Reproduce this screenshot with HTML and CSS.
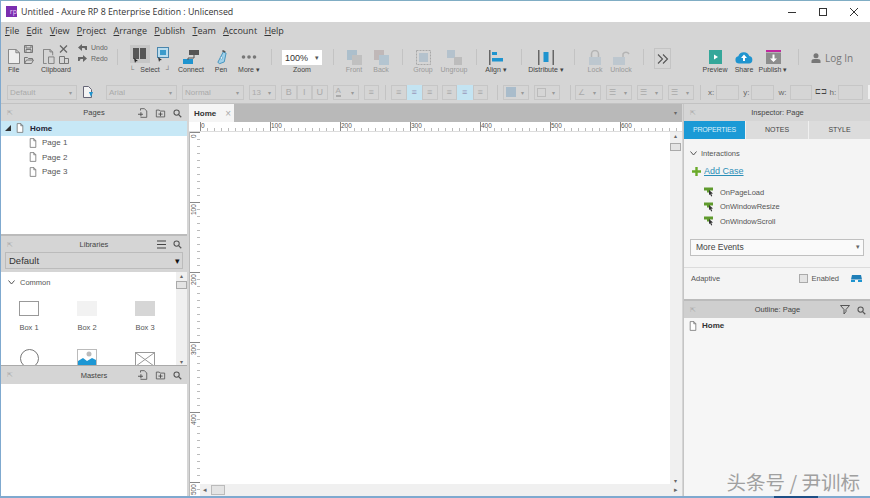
FILE: index.html
```html
<!DOCTYPE html>
<html lang="en">
<head>
  <meta charset="UTF-8" />
  <title>Untitled - Axure RP 8</title>
  <link rel="stylesheet" href="styles.css">
</head>
<body>
  <svg class="defs" width="0" height="0">
    <symbol id="page" viewBox="0 0 10 12"><path d="M1.500.500h4.600l2.400 2.600v8.400h-7zM6 .600v2.600h2.400" fill="#fff" stroke="#666" stroke-width=".9"/></symbol>
    <symbol id="addpage" viewBox="0 0 12 12"><path d="M3 3V.8h4.500L10.500 3.500v7.700H3" fill="none" stroke="#555"/><path d="M0 7.500h6M3.500 5v5" stroke="#444"/></symbol>
    <symbol id="addfolder" viewBox="0 0 12 12"><path d="M1 2.500h3.500l1 1.200h5.500v7H1z" fill="none" stroke="#555"/><path d="M3.500 7.300h5M6 5v4.800" stroke="#444"/></symbol>
    <symbol id="search" viewBox="0 0 12 12"><circle cx="4.800" cy="4.800" r="3.500" fill="none" stroke="#555" stroke-width="1.400"/><path d="M7.500 7.500l3.500 3.500" stroke="#555" stroke-width="1.600"/></symbol>
    <symbol id="event" viewBox="0 0 10 10"><path d="M0 .5h9v3H6v2H3v-2H0z" fill="#5f9a2c"/><path d="M5 3l4 3.500-1.800.3 1 2.300-1 .4-1-2.300L5 8z" fill="#333"/></symbol>
  </svg>

  <div class="window">
    <header class="titlebar">
      <span class="app-logo">rp</span>
      <span class="title">Untitled - Axure RP 8 Enterprise Edition : Unlicensed</span>
      <div class="win-buttons">
        <svg width="10" height="10"><path d="M1 5.500h8" stroke="#333"/></svg>
        <svg width="10" height="10"><rect x="1.500" y="1.500" width="7" height="7" fill="none" stroke="#333"/></svg>
        <svg width="10" height="10"><path d="M1 1l8 8M9 1l-8 8" stroke="#333"/></svg>
      </div>
    </header>

    <nav class="menu">
      <span><u>F</u>ile</span>
      <span><u>E</u>dit</span>
      <span><u>V</u>iew</span>
      <span><u>P</u>roject</span>
      <span><u>A</u>rrange</span>
      <span><u>P</u>ublish</span>
      <span><u>T</u>eam</span>
      <span><u>A</u>ccount</span>
      <span><u>H</u>elp</span>
    </nav>

    <section class="tools">
      <div class="tool file-tool">
        <div class="tool-icons">
          <svg width="12" height="15" viewBox="0 0 13 18" preserveAspectRatio="none"><path d="M.5.500h8l4 4v13H.5zM8.500.500v4h4" fill="#eee" stroke="#777"/></svg>
          <div class="mini-stack">
            <svg width="9" height="8"><path d="M.5.500h8v7h-8zM2 .500v2.500h5V.5M2 7.500v-3h5v3" fill="none" stroke="#777"/></svg>
            <svg width="10" height="8"><path d="M.5 1.500h3l1 1h4v1.500M.5 7.500v-6M.5 7.500h7l2-3.500h-7z" fill="none" stroke="#777"/></svg>
          </div>
        </div>
        <span class="tool-label">File</span>
      </div>
      <div class="tool clip-tool">
        <div class="tool-icons">
          <svg width="12" height="15" viewBox="0 0 13 18" preserveAspectRatio="none"><path d="M.5.500h7l3 3v4M7.500.500v3h3M4 17.500H.5V.5M6 9.500h6v8H6z" fill="none" stroke="#777"/></svg>
          <div class="mini-stack">
            <svg width="9" height="8"><path d="M1 .5l7 7M8 .5l-7 7" stroke="#666" stroke-width="1.300"/></svg>
            <svg width="10" height="8"><path d="M.5 .5h5v7h-5zM5.500 2.500h4v5h-4z" fill="none" stroke="#777"/></svg>
          </div>
        </div>
        <span class="tool-label">Clipboard</span>
      </div>
      <div class="undo-tool">
        <span class="undo-row"><svg width="9" height="7"><path d="M0 3.500L4 0v2h5v4H7.500L6.500 4H4v3z" fill="#666"/></svg>Undo</span>
        <span class="undo-row"><svg width="9" height="7"><path d="M9 3.500L5 0v2H0v4h1.500l1-2H5v3z" fill="#666"/></svg>Redo</span>
      </div>
      <i class="sep"></i>
      <div class="tool">
        <div class="tool-icons select-icons">
          <span class="select-box"><svg width="14" height="15"><path d="M0 0h6v11H0zM7 0h6v11H7z" fill="#555"/><path d="M1 10l4 3-2 .3-1 1.700z" fill="#222"/></svg></span>
          <svg width="13" height="15"><rect x=".5" y=".5" width="11" height="10" fill="#bde" stroke="#4a86ad"/><rect x="3" y="3" width="6" height="5" fill="#3c9bcb"/><path d="M1 10l4 3-2 .3-1 1.700z" fill="#333"/></svg>
        </div>
        <span class="tool-label select-label"><b>└</b>Select<b>┘</b></span>
      </div>
      <div class="tool">
        <svg width="17" height="15"><rect x="6" y="0" width="10" height="5" fill="#555"/><rect x="0" y="9" width="10" height="5" fill="#1f94cf"/><path d="M11 5v3H5v2" fill="none" stroke="#555"/></svg>
        <span class="tool-label">Connect</span>
      </div>
      <div class="tool">
        <svg width="11" height="15" viewBox="0 0 12 17" preserveAspectRatio="none"><path d="M8 2l3 1.500-2 10-5 2-2-1.500z" fill="#9fd0ea" stroke="#3c8fba"/><circle cx="6" cy="9" r="1.300" fill="#fff" stroke="#3c8fba" stroke-width=".6"/><path d="M7.500 0l3 1.500-1 1.500-3-1.500z" fill="#555"/></svg>
        <span class="tool-label">Pen</span>
      </div>
      <div class="tool">
        <svg width="16" height="15"><circle cx="2.500" cy="7" r="1.800" fill="#777"/><circle cx="8" cy="7" r="1.800" fill="#777"/><circle cx="13.500" cy="7" r="1.800" fill="#777"/></svg>
        <span class="tool-label">More ▾</span>
      </div>
      <i class="sep"></i>
      <div class="tool">
        <div class="zoom-box">100%<em>▾</em></div>
        <span class="tool-label">Zoom</span>
      </div>
      <i class="sep"></i>
      <div class="tool off">
        <svg width="15" height="15"><rect x="0" y="0" width="10" height="10" fill="#9fb8c9"/><rect x="5" y="5" width="10" height="10" fill="#b9b9b9"/></svg>
        <span class="tool-label">Front</span>
      </div>
      <div class="tool off">
        <svg width="15" height="15"><rect x="0" y="0" width="10" height="10" fill="#b9afaf"/><rect x="5" y="5" width="10" height="10" fill="#a9c0d0"/></svg>
        <span class="tool-label">Back</span>
      </div>
      <i class="sep"></i>
      <div class="tool off">
        <svg width="15" height="15"><rect x=".5" y=".5" width="14" height="14" fill="none" stroke="#999" stroke-dasharray="2 1"/><rect x="3" y="3" width="9" height="9" fill="#a9bccb"/></svg>
        <span class="tool-label">Group</span>
      </div>
      <div class="tool off">
        <svg width="15" height="15"><rect x="0" y="0" width="8" height="8" fill="#a9bccb"/><rect x="7" y="7" width="8" height="8" fill="#b4b4b4"/></svg>
        <span class="tool-label">Ungroup</span>
      </div>
      <i class="sep"></i>
      <div class="tool">
        <svg width="15" height="15"><rect x="0" y="0" width="1.500" height="15" fill="#666"/><rect x="3" y="2" width="5" height="3" fill="#1f94cf"/><rect x="3" y="8" width="11" height="3.500" fill="#1f94cf"/></svg>
        <span class="tool-label">Align ▾</span>
      </div>
      <i class="sep"></i>
      <div class="tool">
        <svg width="16" height="15"><rect x="0" y="0" width="1.500" height="15" fill="#666"/><rect x="14.500" y="0" width="1.500" height="15" fill="#666"/><rect x="5.500" y="2" width="5" height="10" fill="#1f94cf"/></svg>
        <span class="tool-label">Distribute ▾</span>
      </div>
      <i class="sep"></i>
      <div class="tool off">
        <svg width="14" height="15"><path d="M3.500 7V4a3.500 3.500 0 017 0v3" fill="none" stroke="#aaa" stroke-width="1.500"/><rect x="1" y="7" width="12" height="8" fill="#b5c3cd"/></svg>
        <span class="tool-label">Lock</span>
      </div>
      <div class="tool off">
        <svg width="17" height="15"><path d="M10 7V4a3.500 3.500 0 016 0" fill="none" stroke="#aaa" stroke-width="1.500"/><rect x="0" y="7" width="12" height="8" fill="#b5c3cd"/></svg>
        <span class="tool-label">Unlock</span>
      </div>
      <i class="sep"></i>
      <div class="more-tools">
        <svg width="12" height="10"><path d="M1 .5L5.500 5 1 9.500M6 .5L10.500 5 6 9.500" fill="none" stroke="#555" stroke-width="1.100"/></svg>
      </div>
      <div class="tool">
        <svg width="13" height="14"><rect width="13" height="14" fill="#35a79a"/><path d="M5 4.500l4 2.500-4 2.500z" fill="#fff"/></svg>
        <span class="tool-label">Preview</span>
      </div>
      <div class="tool">
        <svg width="18" height="14" viewBox="0 0 18 14"><path d="M4 13.500a3.700 3.700 0 01-.7-7.300A5.800 5.800 0 0114.300 6a3.800 3.800 0 01-.3 7.500z" fill="#1f94cf"/><path d="M9 4.500L12 8h-2v3H8V8H6z" fill="#fff"/></svg>
        <span class="tool-label">Share</span>
      </div>
      <div class="tool">
        <svg width="15" height="14"><rect width="15" height="2" fill="#c0289f"/><rect y="2.500" width="15" height="11.500" fill="#8d8d8d"/><path d="M6.500 4.500h2v4H11l-3.500 3.500L4 8.500h2.500z" fill="#fff"/></svg>
        <span class="tool-label">Publish ▾</span>
      </div>
      <i class="sep"></i>
      <div class="login">
        <svg width="10" height="10"><circle cx="5" cy="2.800" r="2.500" fill="#777"/><path d="M.5 10V8q0-2 3-2h3q3 0 3 2v2z" fill="#777"/></svg>
        <span>Log In</span>
      </div>
    </section>

    <section class="format">
      <div class="fld fld-style">Default<em>▾</em></div>
      <svg class="style-icon" width="11" height="12"><path d="M.5.500h5l3 3v8h-8z" fill="#f4f4f4" stroke="#667"/><path d="M6 6l4 0-2 5z" fill="#1f94cf"/></svg>
      <div class="fld fld-font">Arial<em>▾</em></div>
      <div class="fld fld-weight">Normal<em>▾</em></div>
      <div class="fld fld-size">13<em>▾</em></div>
      <div class="btns"><span>B</span><span>I</span><span>U</span></div>
      <div class="fld fld-color"><i class="mark mark-a">A</i><em>▾</em></div>
      <div class="btns btns-one"><span>≡</span></div>
      <i class="sep-format"></i>
      <div class="btns btns-align"><span>≡</span><span class="on">≡</span><span>≡</span></div>
      <div class="btns btns-align"><span>≡</span><span class="on">≡</span><span>≡</span></div>
      <i class="sep-format sep-a"></i>
      <div class="fld fld-swatch"><i class="mark mark-fill"></i><em>▾</em></div>
      <div class="fld fld-swatch"><i class="mark mark-line"></i><em>▾</em></div>
      <i class="sep-format sep-b"></i>
      <div class="fld fld-swatch"><i class="mark">∠</i><em>▾</em></div>
      <div class="fld fld-swatch"><i class="mark">☰</i><em>▾</em></div>
      <div class="fld fld-swatch"><i class="mark">☰</i><em>▾</em></div>
      <div class="fld fld-swatch"><i class="mark">☰</i><em>▾</em></div>
      <i class="sep-format sep-c"></i>
      <label class="coord">x:<span class="coord-x"></span></label>
      <label class="coord">y:<span class="coord-y"></span></label>
      <label class="coord">w:<span class="coord-w"></span></label>
      <label class="coord"><b>⊏⊐</b>h:<span class="coord-h"></span></label>
      <span class="format-end"></span>
    </section>

    <div class="workspace">
      <aside class="left">
        <div class="panel-head">
          <i class="pin">⇱</i><span>Pages</span>
          <div class="head-icons">
            <svg width="10" height="10"><use href="#addpage"/></svg>
            <svg width="11" height="10"><use href="#addfolder"/></svg>
            <svg width="9" height="9"><use href="#search"/></svg>
          </div>
        </div>
        <ul class="pages">
          <li class="page-home">
            <svg class="tree-arrow" width="6" height="6"><path d="M6 0v6H0z" fill="#333"/></svg>
            <svg width="8" height="10"><use href="#page"/></svg>
            <b>Home</b>
          </li>
          <li><svg width="8" height="10"><use href="#page"/></svg>Page 1</li>
          <li><svg width="8" height="10"><use href="#page"/></svg>Page 2</li>
          <li><svg width="8" height="10"><use href="#page"/></svg>Page 3</li>
        </ul>

        <div class="panel-head libs-head">
          <i class="pin">⇱</i><span>Libraries</span>
          <div class="head-icons">
            <svg width="9" height="9"><path d="M0 1h9M0 4.500h9M0 8h9" stroke="#444" stroke-width="1.200"/></svg>
            <svg width="9" height="9"><use href="#search"/></svg>
          </div>
        </div>
        <div class="lib-select-row">
          <div class="lib-select">Default<em>▾</em></div>
        </div>
        <div class="lib-body">
          <div class="lib-list">
            <div class="lib-group"><svg width="7" height="5"><path d="M.5.500L3.500 4 6.500.500" fill="none" stroke="#555"/></svg>Common</div>
            <div class="widgets">
              <div class="widget"><i class="box box1"></i>Box 1</div>
              <div class="widget"><i class="box box2"></i>Box 2</div>
              <div class="widget"><i class="box box3"></i>Box 3</div>
              <div class="widget"><i class="circle"></i></div>
              <div class="widget">
                <svg class="pic" width="20" height="18"><rect x=".5" y=".5" width="19" height="17" fill="#fff" stroke="#bbb"/><circle cx="12" cy="5" r="2.500" fill="#bbb"/><path d="M1 12l5-3 4 3 5-3 4 2v7H1z" fill="#1d97d4"/></svg>
              </div>
              <div class="widget">
                <svg class="pic pic-ph" width="20" height="15"><rect x=".5" y=".5" width="19" height="14" fill="#fff" stroke="#999"/><path d="M1 1l18 13M19 1L1 14" stroke="#999"/></svg>
              </div>
            </div>
          </div>
          <div class="lib-scroll"><em>▴</em><i></i><em class="down">▾</em></div>
        </div>

        <div class="panel-head masters-head">
          <i class="pin">⇱</i><span>Masters</span>
          <div class="head-icons">
            <svg width="10" height="10"><use href="#addpage"/></svg>
            <svg width="11" height="10"><use href="#addfolder"/></svg>
            <svg width="9" height="9"><use href="#search"/></svg>
          </div>
        </div>
        <div class="masters-body"></div>
      </aside>

      <main class="center">
        <div class="tabs">
          <div class="tab"><b>Home</b><i>×</i></div>
          <em class="tabs-menu">▾</em>
        </div>
        <div class="ruler-top">
          <span>0</span><span>100</span><span>200</span><span>300</span><span>400</span><span>500</span><span>600</span>
        </div>
        <div class="stage">
          <div class="ruler-left">
            <span>0</span><span>100</span><span>200</span><span>300</span><span>400</span><span>500</span>
          </div>
          <div class="stage-main">
            <div class="stage-view">
              <div class="canvas"></div>
              <div class="v-scroll"><em>▴</em><i></i><em class="down">▾</em></div>
            </div>
            <div class="h-scroll"><em>◂</em><i></i><em class="end">▸</em></div>
          </div>
        </div>
      </main>

      <aside class="right">
        <div class="panel-head">
          <i class="pin">⇱</i><span>Inspector: Page</span>
        </div>
        <div class="insp-tabs">
          <span class="active">PROPERTIES</span>
          <span>NOTES</span>
          <span>STYLE</span>
        </div>
        <div class="insp-body">
          <div class="interactions"><svg width="7" height="5"><path d="M.5.500L3.500 4 6.500.500" fill="none" stroke="#555"/></svg>Interactions</div>
          <div class="add-case"><svg width="9" height="9"><path d="M4.500 0v9M0 4.500h9" stroke="#6aaa2a" stroke-width="2.400"/></svg><a>Add Case</a></div>
          <ul class="events">
            <li><svg width="10" height="10"><use href="#event"/></svg>OnPageLoad</li>
            <li><svg width="10" height="10"><use href="#event"/></svg>OnWindowResize</li>
            <li><svg width="10" height="10"><use href="#event"/></svg>OnWindowScroll</li>
          </ul>
          <div class="more-events">More Events<em>▾</em></div>
          <div class="adaptive">
            <span>Adaptive</span>
            <i class="check"></i>
            <span class="enabled">Enabled</span>
            <svg width="11" height="7"><path d="M1 0h9l1 4.500H0z" fill="#1f7fb8"/><path d="M0 5h4v2H0zM7 5h4v2H7z" fill="#1f94cf"/></svg>
          </div>
        </div>
        <div class="panel-head outline-head">
          <i class="pin">⇱</i><span>Outline: Page</span>
          <div class="head-icons">
            <svg width="10" height="10"><path d="M.5.500h9L6 4.500v2L4 9V4.500z" fill="none" stroke="#555"/></svg>
            <svg width="9" height="9"><use href="#search"/></svg>
          </div>
        </div>
        <div class="outline-body">
          <svg width="8" height="10"><use href="#page"/></svg><b>Home</b>
        </div>
      </aside>
    </div>
    <div class="bottom-edge"></div>
  </div>

  <div class="watermark">头条号 / 尹训标</div>
</body>
</html>
```

FILE: styles.css
```css
* {
  box-sizing: border-box;
}

html,
body {
  margin: 0;
  height: 100%;
  overflow: hidden;
}

body {
  position: relative;
  font-family: "Liberation Sans", Arial, sans-serif;
  font-size: 8px;
  color: #444;
  background: #d5d5d5;
}

ul {
  margin: 0;
  padding: 0;
  list-style: none;
}

em,
i {
  font-style: normal;
}

svg {
  flex: none;
  display: block;
}

.defs {
  position: absolute;
}

.window {
  display: flex;
  flex-direction: column;
  width: 870px;
  height: 498px;
  border-left: 1px solid #7fa9cf;
}

/* title + menu */

.titlebar {
  display: flex;
  align-items: center;
  height: 22px;
  flex: none;
  padding-left: 5px;
  background: #fff;
  border-top: 1px solid #80adc4;
  font-family: "Open Sans", sans-serif;
  font-size: 8.800px;
  color: #333;
}

.app-logo {
  width: 11px;
  height: 11px;
  margin-right: 4px;
  background: #7b2fb0;
  color: #e9c9f5;
  font-size: 7px;
  line-height: 12px;
  text-align: right;
}

.win-buttons {
  display: flex;
  gap: 21px;
  margin-left: auto;
  margin-right: 11px;
}

.menu {
  display: flex;
  flex: none;
  gap: 7.300px;
  height: 16px;
  align-items: center;
  padding-left: 4px;
  font-family: "Open Sans", sans-serif;
  font-size: 9px;
  color: #333;
}

/* big toolbar */

.tools {
  display: grid;
  flex: none;
  height: 44px;
  grid-template-columns: 37px 30px 42px 9px 56px 26px 34px 22px 22px 40px 22px 20px 34px 8px 34px 28px 16px 24px 26px 24px 32px 10px 42px 2px 56px 30px 28px 30px 20px 44px;
  align-items: start;
  padding: 8px 0 0 3px;
}

.tool {
  display: flex;
  flex-direction: column;
  align-items: center;
  justify-content: flex-end;
  height: 28px;
  white-space: nowrap;
}

.tool > svg {
  margin-bottom: auto;
  margin-top: 4px;
}

.tool-icons {
  display: flex;
  align-items: flex-end;
  gap: 4px;
  margin-top: -1px;
  margin-bottom: auto;
}

.file-tool {
  align-items: flex-start;
  padding-left: 4px;
}

.mini-stack {
  display: flex;
  flex-direction: column;
  gap: 3px;
}

.tool-label {
  font-size: 7px;
  line-height: 8px;
  color: #444;
}

.off svg {
  opacity: 0.75;
}

.off .tool-label {
  color: #999;
}

.undo-tool {
  display: flex;
  flex-direction: column;
  gap: 4px;
  padding-left: 7px;
  margin-top: -2px;
  font-size: 7px;
  color: #666;
}

.undo-row {
  display: flex;
  gap: 4px;
  align-items: center;
}

.sep {
  justify-self: center;
  width: 1px;
  height: 16px;
  margin-top: 3px;
  background: #c3c3c3;
}

.select-icons {
  gap: 7px;
  align-items: center;
}

.select-box {
  padding: 3px 3px 0;
  background: #c6c6c6;
}

.select-label {
  display: flex;
  gap: 6px;
}

.select-label b {
  font-weight: normal;
  color: #777;
}

.zoom-box {
  display: flex;
  justify-content: space-between;
  align-items: center;
  width: 40px;
  height: 15px;
  margin-top: 4px;
  margin-bottom: auto;
  padding: 0 3px 0 3px;
  background: #fff;
  font-size: 9px;
  color: #333;
}

.zoom-box em {
  font-size: 7px;
  color: #555;
}

.more-tools {
  display: flex;
  align-items: center;
  justify-content: center;
  width: 17px;
  height: 21px;
  margin: 2px 0 0 10px;
  border: 1px solid #c4c4c4;
}

.login {
  display: flex;
  align-items: center;
  gap: 4px;
  margin: 5px 0 0 3px;
  font-family: "Open Sans", sans-serif;
  font-size: 10px;
  color: #777;
  white-space: nowrap;
}

/* format toolbar */

.format {
  display: flex;
  flex: none;
  align-items: center;
  height: 22px;
  padding: 0 0 1px 6px;
  color: #aaa;
  border-bottom: 1px solid #c2c2c2;
}

.format > * {
  flex: none;
}

.fld {
  display: flex;
  justify-content: space-between;
  align-items: center;
  height: 15px;
  padding: 0 4px 0 2px;
  margin-right: 5px;
  border: 1px solid #c6c6c6;
  font-size: 8px;
}

.fld em {
  font-size: 6px;
  color: #999;
}

.fld-style {
  width: 70px;
}

.style-icon {
  margin: 0 12px 0 1px;
}

.fld-font {
  width: 71px;
}

.fld-weight {
  width: 62px;
}

.fld-size {
  width: 27px;
}

.fld-color {
  width: 26px;
}

.fld-swatch {
  width: 26px;
}

.btns {
  display: flex;
  margin-right: 5px;
}

.btns span {
  display: block;
  width: 15.500px;
  height: 15px;
  border: 1px solid #c6c6c6;
  text-align: center;
  line-height: 13px;
  font-size: 9px;
}

.btns .on {
  background: #c4e4f2;
  color: #99b;
  border-color: #c4e4f2;
}

.btns-align {
  margin-right: 4px;
}

.mark {
  font-size: 8px;
  color: #aaa;
}

.mark-a {
  border-bottom: 2px solid #aaa;
  line-height: 8px;
}

.mark-fill {
  width: 10px;
  height: 10px;
  background: #a9bccb;
}

.mark-line {
  width: 9px;
  height: 9px;
  border: 1px solid #bbb;
}

.sep-format {
  width: 1px;
  height: 15px;
  margin: 0 5px 0 1px;
  background: #c3c3c3;
}

.sep-a {
  margin: 0 5px 0 5px;
}

.sep-b {
  margin: 0 4px 0 5px;
}

.sep-c {
  margin: 0 7px 0 1px;
}

.coord {
  display: flex;
  align-items: center;
  gap: 2px;
  color: #666;
  font-size: 8px;
}

.coord span {
  display: block;
  height: 15px;
  border: 1px solid #c6c6c6;
}

.coord b {
  font-weight: normal;
  font-size: 7px;
  color: #444;
}

.coord-x {
  width: 23px;
  margin-right: 4px;
}

.coord-y {
  width: 23px;
  margin-right: 4px;
}

.coord-w {
  width: 22px;
  margin-left: 2px;
  margin-right: 3px;
}

.coord-h {
  width: 25px;
  margin-right: 5px;
}

.format-end {
  width: 10px;
  height: 14px;
  background: #f0f0f0;
}

/* main area */

.workspace {
  display: flex;
  flex: 1;
  min-height: 0;
}

.panel-head {
  position: relative;
  display: flex;
  flex: none;
  align-items: center;
  justify-content: center;
  height: 17px;
  background: #d5d5d5;
  font-size: 7.500px;
  color: #444;
}

.pin {
  position: absolute;
  left: 6px;
  top: 5px;
  font-size: 7px;
  color: #aaa;
}

.head-icons {
  position: absolute;
  right: 5px;
  top: 4px;
  display: flex;
  align-items: center;
  gap: 7px;
}

.left {
  display: flex;
  flex-direction: column;
  flex: none;
  width: 186px;
  background: #fff;
}

.pages {
  flex: none;
  height: 113px;
  background: #fff;
  color: #555;
}

.pages li {
  display: flex;
  align-items: center;
  gap: 5px;
  height: 14.500px;
  padding-left: 28px;
  font-size: 8px;
}

.pages .page-home {
  padding-left: 4px;
  gap: 5px;
  background: #c7e8f6;
  color: #223;
}

.page-home b {
  margin-left: 1px;
}

.libs-head {
  height: 18px;
  border-top: 2px solid #bbb;
}

.lib-select-row {
  flex: none;
  height: 20px;
  padding: 0 4px 2px;
  background: #d5d5d5;
}

.lib-select {
  display: flex;
  justify-content: space-between;
  align-items: center;
  height: 17px;
  padding: 0 2px 0 3px;
  border: 1px solid #bbb;
  font-size: 9.500px;
  color: #333;
}

.lib-select em {
  font-size: 9px;
  color: #111;
}

.lib-body {
  display: flex;
  flex: none;
  height: 93px;
  overflow: hidden;
}

.lib-list {
  flex: 1;
  padding-top: 3px;
}

.lib-group {
  display: flex;
  align-items: center;
  gap: 5px;
  padding-left: 7px;
  height: 14px;
  font-size: 7.500px;
  color: #555;
}

.widgets {
  display: grid;
  grid-template-columns: repeat(3, 58px);
  grid-auto-rows: 48px;
  margin-left: -1px;
  padding-top: 12px;
  font-size: 7.500px;
  color: #555;
}

.widget {
  display: flex;
  flex-direction: column;
  align-items: center;
  gap: 7px;
}

.box {
  display: block;
  width: 20px;
  height: 15px;
}

.box1 {
  background: #fff;
  border: 1px solid #999;
}

.box2 {
  background: #f2f2f2;
}

.box3 {
  background: #d6d6d6;
}

.circle {
  width: 19px;
  height: 19px;
  border: 1px solid #777;
  border-radius: 50%;
}

.pic-ph {
  margin-top: 3px;
}

.lib-scroll,
.v-scroll {
  display: flex;
  flex-direction: column;
  align-items: center;
  flex: none;
  width: 11px;
  background: #f0f0f0;
  font-size: 6px;
  color: #666;
}

.lib-scroll i,
.v-scroll i {
  display: block;
  width: 11px;
  height: 8px;
  margin-top: 2px;
  background: #e4e4e4;
  border: 1px solid #aaa;
}

.v-scroll i {
  margin-top: 4px;
}

.lib-scroll .down,
.v-scroll .down {
  margin-top: auto;
}

.masters-head {
  height: 19px;
  border-top: 1px solid #aaa;
}

.masters-body {
  flex: 1;
  background: #fff;
}

.center {
  display: flex;
  flex-direction: column;
  flex: none;
  width: 493px;
  margin-left: 2px;
}

.tabs {
  display: flex;
  align-items: stretch;
  flex: none;
  height: 18px;
  background: #b9b9b9;
}

.tab {
  display: flex;
  align-items: center;
  justify-content: space-between;
  width: 45px;
  padding: 0 3px 0 5px;
  background: #f5f5f5;
  font-size: 8px;
  color: #333;
}

.tab i {
  color: #aaa;
  font-size: 10px;
}

.tabs-menu {
  margin: 5px 5px 0 auto;
  font-size: 6px;
  color: #666;
}

.ruler-top {
  display: flex;
  flex: none;
  height: 10px;
  padding-left: 11px;
  background-color: #fff;
  background-image:
    repeating-linear-gradient(90deg, #888 0 1px, transparent 1px 70px),
    repeating-linear-gradient(90deg, #bbb 0 1px, transparent 1px 7px);
  background-size: 100% 9px, 100% 3px;
  background-position: 11px 0, 11px 100%;
  background-repeat: no-repeat;
  font-size: 6.500px;
  line-height: 7px;
  color: #555;
  border-bottom: 1px solid #ddd;
}

.ruler-top span {
  flex: none;
  width: 70px;
  padding-left: 1px;
}

.stage {
  display: flex;
  flex: 1;
  min-height: 0;
}

.ruler-left {
  display: flex;
  flex-direction: column;
  flex: none;
  width: 11px;
  background-color: #fff;
  background-image:
    repeating-linear-gradient(180deg, #888 0 1px, transparent 1px 70px),
    repeating-linear-gradient(180deg, #bbb 0 1px, transparent 1px 7px);
  background-size: 11px 100%, 3px 100%;
  background-position: 0 0, 100% 0;
  background-repeat: no-repeat;
  border-left: 1px solid #bbb;
  font-size: 6.500px;
  color: #555;
  overflow: hidden;
}

.ruler-left span {
  flex: none;
  height: 70px;
  padding-bottom: 2px;
  line-height: 8px;
  writing-mode: vertical-rl;
  transform: rotate(180deg);
  text-align: end;
}

.stage-main {
  display: flex;
  flex-direction: column;
  flex: 1;
  min-width: 0;
}

.stage-view {
  display: flex;
  flex: 1;
  min-height: 0;
}

.canvas {
  flex: 1;
  background: #fff;
}

.v-scroll {
  width: 12px;
  padding-right: 1px;
}

.h-scroll {
  display: flex;
  flex: none;
  align-items: center;
  height: 12px;
  padding-left: 3px;
  background: #f0f0f0;
  font-size: 7px;
  color: #666;
}

.h-scroll i {
  width: 14px;
  height: 10px;
  margin-left: 4px;
  background: #e4e4e4;
  border: 1px solid #bbb;
}

.h-scroll .end {
  margin-left: auto;
  margin-right: 4px;
}

.right {
  display: flex;
  flex-direction: column;
  flex: none;
  width: 188px;
  margin-left: 1px;
  background: #f4f4f4;
  border-left: 1px solid #c5c5c5;
}

.insp-tabs {
  display: grid;
  flex: none;
  grid-template-columns: 62px 63px 62px;
  height: 18px;
  background: #f4f4f4;
  font-size: 7px;
  line-height: 18px;
  text-align: center;
  color: #444;
}

.insp-tabs span {
  background: #dcdcdc;
  border-right: 1px solid #f0f0f0;
}

.insp-tabs .active {
  background: #1b9ad6;
  color: #dff1fa;
  letter-spacing: -0.200px;
}

.insp-body {
  flex: none;
  height: 160px;
  padding: 9px 7px 0 6px;
  font-size: 7.500px;
  color: #555;
}

.interactions {
  display: flex;
  align-items: center;
  gap: 4px;
  height: 10px;
  font-size: 7.500px;
}

.add-case {
  display: flex;
  align-items: center;
  gap: 3px;
  margin-top: 8px;
  padding-left: 2px;
  font-size: 9px;
  height: 10px;
}

.add-case a {
  color: #2c8fb8;
  text-decoration: underline;
}

.events {
  margin-top: 9px;
  padding-left: 14px;
}

.events li {
  display: flex;
  align-items: center;
  gap: 6px;
  height: 14.500px;
  font-size: 7.500px;
}

.more-events {
  display: flex;
  justify-content: space-between;
  align-items: center;
  height: 17px;
  margin-top: 10px;
  padding: 0 3px 0 5px;
  background: #fafafa;
  border: 1px solid #c0c0c0;
  font-size: 8.500px;
  color: #444;
}

.more-events em {
  font-size: 7px;
  color: #666;
}

.adaptive {
  display: flex;
  align-items: center;
  margin: 11px -7px 0 -6px;
  padding: 6px 9px 0 7px;
  border-top: 1px solid #dcdcdc;
  font-size: 7.500px;
}

.check {
  width: 9px;
  height: 9px;
  margin-left: auto;
  background: #e4e4e4;
  border: 1px solid #aaa;
}

.enabled {
  margin: 0 12px 0 3px;
}

.outline-head {
  height: 19px;
  border-top: 2px solid #bbb;
  background: #cfcfcf;
}

.outline-body {
  display: flex;
  flex: 1;
  align-items: flex-start;
  gap: 5px;
  padding: 3px 0 0 5px;
  background: #f6f6f6;
  font-size: 8px;
  color: #333;
}

.bottom-edge {
  flex: none;
  height: 2px;
  background: linear-gradient(90deg, #7fa9cf 773px, #1d4f86 773px 817px, #7fa9cf 817px);
}

/* sits over the bottom right corner of the screenshot */
.watermark {
  position: absolute;
  right: 10px;
  bottom: 4px;
  font-family: "Noto Sans CJK SC", sans-serif;
  font-size: 19.500px;
  line-height: 24px;
  color: #a0a0a0;
}
```
